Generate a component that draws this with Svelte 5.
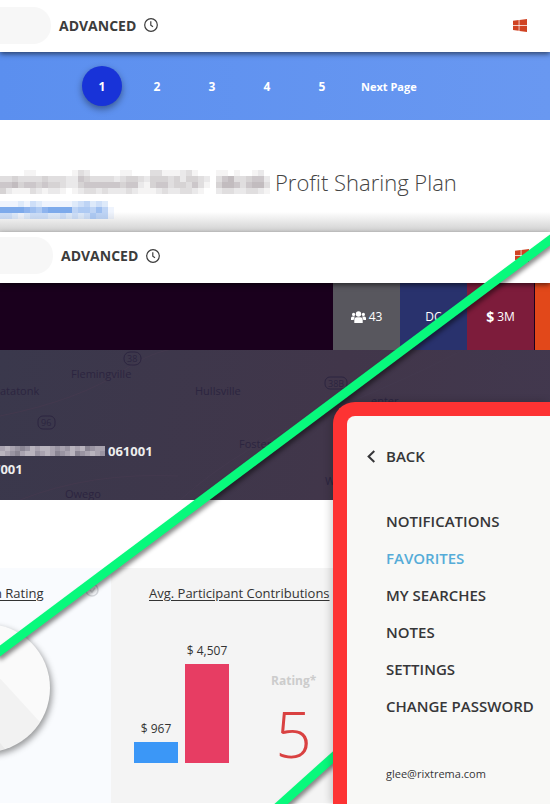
<script lang="ts">
	const pages = [1, 2, 3, 4, 5];

	const menu = ['Notifications', 'Favorites', 'My Searches', 'Notes', 'Settings', 'Change Password'];

	const bars = [
		{ label: '$ 967', value: 21, kind: 'blue' },
		{ label: '$ 4,507', value: 99, kind: 'red' },
	];

	// each digit is the strength of one block of the censored text
	const nameBlocks = [
		'000011000000132000001100033111231000110100120',
		'334333343332254333323443244434244320356334552',
		'556455454432245555554552145534435310466535663',
		'421113212210123323222321112322332100233223321',
	];
	const linkBlocks = ['1112132111112342320', '8888765788884554641', '3321233322323235441'];
	const idBlocks = ['787656878876768785677', '876578867875678567876'];
</script>

{#snippet mosaic(rows: string[], size: number, kind: string)}
	<svg class="mosaic {kind}" width={rows[0].length * size} height={rows.length * size} aria-hidden="true">
		{#each rows as row, y}
			{#each row.split('') as level, x}
				<rect x={x * size} y={y * size} width={size} height={size} opacity={Number(level) / 9} />
			{/each}
		{/each}
	</svg>
{/snippet}

{#snippet topbar(second: boolean)}
	<header class="topbar" class:second>
		<input class="search" type="search" aria-label="Search" />
		<button class="advanced">
			ADVANCED
			<svg width="14" height="14" viewBox="0 0 14 14" aria-hidden="true">
				<circle cx="7" cy="7" r="6.3" />
				<path d="M6.8 3.2V7.3L9 8.8" />
			</svg>
		</button>
		<svg class="windows" width="14" height="13" viewBox="0 0 14 13" aria-hidden="true">
			<path d="M0 1.8 5.7 1V6H0ZM6.4.9 14 0V6H6.4ZM0 6.7H5.7V11.8L0 11ZM6.4 6.7H14V13L6.4 11.9Z" />
		</svg>
	</header>
{/snippet}

<div class="page">
	<section class="results">
		{@render topbar(false)}
		<nav class="pagination">
			{#each pages as page}
				<button class:current={page === 1}>{page}</button>
			{/each}
			<button class="next">Next Page</button>
		</nav>
		<div class="plan">
			<h1>{@render mosaic(nameBlocks, 6, 'name')}<span>Profit Sharing Plan</span></h1>
			<a href="#plan" aria-label="Plan sponsor">{@render mosaic(linkBlocks, 6, 'sponsor')}</a>
		</div>
	</section>

	<section class="details">
		{@render topbar(true)}
		<div class="stats">
			<div class="tile people">
				<svg width="15" height="12" viewBox="0 0 15 12" aria-hidden="true">
					<circle cx="7.5" cy="3" r="2.7" />
					<circle cx="2.6" cy="3.4" r="1.6" />
					<circle cx="12.4" cy="3.4" r="1.6" />
					<path d="M3.3 12V9Q3.3 6.2 5.6 6.2H9.4Q11.7 6.2 11.7 9V12ZM0 9V7.1Q0 5.4 1.6 5.4H3.8L2.6 9ZM15 9V7.1Q15 5.4 13.4 5.4H11.2L12.4 9Z" />
				</svg>
				43
			</div>
			<div class="tile type">DC</div>
			<div class="tile assets"><b>$</b> 3M</div>
			<div class="tile more"></div>
		</div>
		<div class="map">
			<svg class="places" width="550" height="150" aria-hidden="true">
				<g class="roads">
					<path d="M0 66Q80 50 124 20T210 0M180 150Q240 96 330 60T470 -4M490 0Q510 30 550 58M20 150Q90 122 178 126" />
				</g>
				<g class="routes">
					<rect x="124" y="2" width="17" height="13" rx="6" />
					<rect x="38" y="66" width="17" height="13" rx="5" />
					<rect x="325" y="27" width="22" height="12" rx="5" />
				</g>
				<text class="small" x="127" y="12">38</text>
				<text class="small" x="41" y="76">96</text>
				<text class="small" x="328" y="37">38B</text>
				<text x="71" y="28">Flemingville</text>
				<text x="0" y="45">atatonk</text>
				<text x="195" y="45">Hullsville</text>
				<text x="239" y="98">Foster</text>
				<text x="371" y="55">enter</text>
				<text x="325" y="135">W</text>
				<text x="65" y="148">Owego</text>
			</svg>
			<div class="ids">
				<div>{@render mosaic(idBlocks, 5, 'number')}061001</div>
				<div class="cut">7001</div>
			</div>
		</div>
		<div class="cards">
			<article class="card plan-rating">
				<h2>n Rating</h2>
				<svg class="pie" width="70" height="150" viewBox="0 613 70 150" aria-hidden="true">
					<circle class="disc" cx="-14" cy="688" r="64" />
					<path class="slice" d="M-14 663 40 722A64 64 0 0 1-14 752Z" />
					<path class="slice" d="M-14 725 5 749A64 64 0 0 1-14 752Z" />
				</svg>
			</article>
			<article class="card contributions">
				<h2>Avg. Participant Contributions</h2>
				<div class="chart">
					{#each bars as bar}
						<div class="bar">
							<span>{bar.label}</span>
							<div class={bar.kind} style="height: {bar.value}px"></div>
						</div>
					{/each}
					<div class="rating">
						<b>Rating*</b>
						<strong>5</strong>
					</div>
				</div>
			</article>
		</div>
	</section>

	<svg class="divider" viewBox="0 0 550 804" preserveAspectRatio="none" aria-hidden="true">
		<circle class="help" cx="92" cy="590" r="6" />
		<path class="help" d="M90 590 92 592 95 588" />
		<path class="line" d="M-4 654 554 237" />
		<path class="line" d="M270 814 340 751" />
	</svg>

	<aside class="panel">
		<button class="back">
			<svg width="9" height="13" viewBox="0 0 9 13" aria-hidden="true"><path d="M7.3 1 1.6 6.5 7.3 12" /></svg>
			BACK
		</button>
		<nav>
			{#each menu as item}
				<a href="#menu" class:active={item === 'Favorites'}>{item.toUpperCase()}</a>
			{/each}
		</nav>
		<p>glee@rixtrema.com</p>
	</aside>
</div>

<style>
	:global(body) {
		margin: 0;
		background: #fff;
	}

	.page {
		position: relative;
		overflow: hidden;
		min-height: 100vh;
		color: #333;
		font-family: 'Open Sans', 'Noto Sans', sans-serif;
		font-size: 12px;
	}

	button {
		padding: 0;
		border: 0;
		background: none;
		color: inherit;
		font: inherit;
		cursor: pointer;
	}

	.topbar {
		position: relative;
		display: flex;
		align-items: center;
		box-sizing: border-box;
		height: 52px;
		padding: 0 23px 2px 0;
		background: #fff;
		box-shadow: 0 2px 5px rgba(0, 0, 0, 0.55);
	}

	.topbar.second {
		height: 51px;
		padding: 0 21px 4px 0;
	}

	.search {
		box-sizing: border-box;
		width: 51px;
		height: 37px;
		padding: 0 12px;
		border: 0;
		border-radius: 0 18px 18px 0;
		background: #f7f7f7;
	}

	.second .search {
		width: 53px;
	}

	.advanced {
		display: flex;
		align-items: center;
		gap: 8px;
		margin-left: 8px;
		color: #3c3c3c;
		font-size: 14px;
		font-weight: 700;
	}

	.advanced svg {
		fill: none;
		stroke: #3c3c3c;
		stroke-width: 1.2;
	}

	.windows {
		margin-left: auto;
		fill: #d04323;
	}

	.pagination {
		display: flex;
		align-items: center;
		gap: 15px;
		height: 68px;
		padding-left: 82px;
		background: linear-gradient(90deg, #5b8fef, #6998f1);
		color: #fff;
		font-weight: 700;
	}

	.pagination button {
		width: 40px;
		height: 40px;
		border-radius: 50%;
	}

	.pagination .current {
		background: #1833d8;
		box-shadow: 0 3px 7px rgba(0, 0, 0, 0.4);
	}

	.pagination .next {
		width: auto;
		margin-left: 4px;
		font-size: 11px;
	}

	.plan {
		display: flex;
		flex-direction: column;
		gap: 3px;
		height: 66px;
		padding-top: 46px;
		background: linear-gradient(#fff 82%, #cfcfcf);
	}

	.plan h1 {
		display: flex;
		align-items: center;
		gap: 5px;
		height: 32px;
		margin: 0;
		color: #444;
		font-size: 22px;
		font-weight: 300;
		white-space: nowrap;
	}

	.mosaic {
		flex: none;
		shape-rendering: crispEdges;
	}

	.name {
		fill: #a39b9f;
	}

	.sponsor {
		display: block;
		fill: #6d9fe9;
	}

	.number {
		fill: #c9c3cd;
	}

	.stats {
		display: flex;
		justify-content: flex-end;
		height: 67px;
		background: #1a001d;
		color: #fff;
	}

	.tile {
		display: flex;
		align-items: center;
		justify-content: center;
		gap: 3px;
		width: 67px;
	}

	.tile svg {
		fill: #fff;
	}

	.tile b {
		font-size: 14px;
	}

	.people {
		background: #58575e;
	}

	.type {
		background: #29326d;
	}

	.assets {
		background: #7d1c3b;
	}

	.more {
		width: 15px;
		margin-left: 1px;
		background: #e2481a;
	}

	.map {
		position: relative;
		display: flex;
		flex-direction: column;
		justify-content: flex-end;
		box-sizing: border-box;
		height: 150px;
		padding-bottom: 22px;
		background: linear-gradient(100deg, #3a384c, #41364a 60%, #42384e);
	}

	.places {
		position: absolute;
		top: 0;
		left: 0;
		fill: #2c2540;
		font-size: 11px;
	}

	.small {
		font-size: 9px;
	}

	.routes {
		fill: none;
		stroke: #2c2540;
	}

	.roads {
		fill: none;
		stroke: #43394e;
	}

	.ids {
		position: relative;
		color: #eee;
		font-size: 13px;
		font-weight: 700;
		line-height: 18px;
	}

	.ids div {
		display: flex;
		align-items: center;
		gap: 3px;
	}

	.ids .cut {
		margin-left: -7px;
	}

	.cards {
		display: flex;
		height: 235px;
		margin-top: 68px;
	}

	.card {
		padding-top: 15px;
	}

	.card h2 {
		margin: 0;
		color: #333;
		font-size: 13px;
		font-weight: 400;
		line-height: 20px;
		text-decoration: underline;
		text-underline-offset: 2px;
		white-space: nowrap;
	}

	.plan-rating {
		width: 111px;
		background: #f9fbfe;
	}

	.plan-rating h2 {
		margin-left: -6px;
	}

	.pie {
		display: block;
		margin-top: 10px;
		overflow: visible;
	}

	.disc {
		fill: #fafafa;
		filter: drop-shadow(2px 3px 3px rgba(0, 0, 0, 0.4));
	}

	.slice {
		fill: rgba(0, 0, 0, 0.03);
	}

	.contributions {
		flex: 1;
		padding-left: 23px;
		background: #f4f4f4;
	}

	.contributions h2 {
		padding-left: 15px;
	}

	.chart {
		display: flex;
		align-items: flex-end;
		gap: 7px;
		height: 160px;
	}

	.bar {
		display: flex;
		flex-direction: column;
		align-items: center;
		gap: 4px;
		width: 44px;
		line-height: 18px;
		white-space: nowrap;
	}

	.bar div {
		width: 100%;
	}

	.blue {
		background: #3b97f7;
	}

	.red {
		background: #e73d63;
	}

	.rating {
		display: flex;
		flex-direction: column;
		align-items: center;
		gap: 16px;
		margin-left: 35px;
	}

	.rating b {
		color: #ccc;
		font-size: 12px;
		line-height: 16px;
	}

	.rating strong {
		color: #d94141;
		font-size: 64px;
		font-weight: 300;
		line-height: 58px;
	}

	.divider {
		position: absolute;
		inset: 0;
		width: 100%;
		height: 100%;
		pointer-events: none;
	}

	.line {
		fill: none;
		stroke: #08f97c;
		stroke-width: 9;
		filter: drop-shadow(2px 3px 2px rgba(0, 0, 0, 0.45));
	}

	.help {
		fill: none;
		stroke: #d6d9de;
		stroke-width: 1.5;
	}

	.panel {
		position: absolute;
		top: 402px;
		right: 0;
		bottom: 0;
		box-sizing: border-box;
		width: 217px;
		padding: 30px 0 0 20px;
		border: solid #fd3333;
		border-width: 14px 0 0 14px;
		border-radius: 22px 0 0 0;
		background: #f8f8f6;
		box-shadow: -2px 0 8px rgba(0, 0, 0, 0.2);
		color: #363638;
	}

	.back {
		display: flex;
		align-items: center;
		gap: 10px;
		height: 20px;
		font-size: 15px;
		font-weight: 600;
	}

	.back svg {
		fill: none;
		stroke: #363638;
		stroke-width: 2;
	}

	.panel nav {
		display: flex;
		flex-direction: column;
		margin: 37px 0 0 19px;
	}

	.panel a {
		color: inherit;
		font-size: 15px;
		font-weight: 600;
		line-height: 37px;
		text-decoration: none;
		white-space: nowrap;
	}

	.panel a.active {
		color: #55acd8;
	}

	.panel p {
		margin: 39px 0 0 19px;
		font-size: 11px;
		line-height: 20px;
	}
</style>
